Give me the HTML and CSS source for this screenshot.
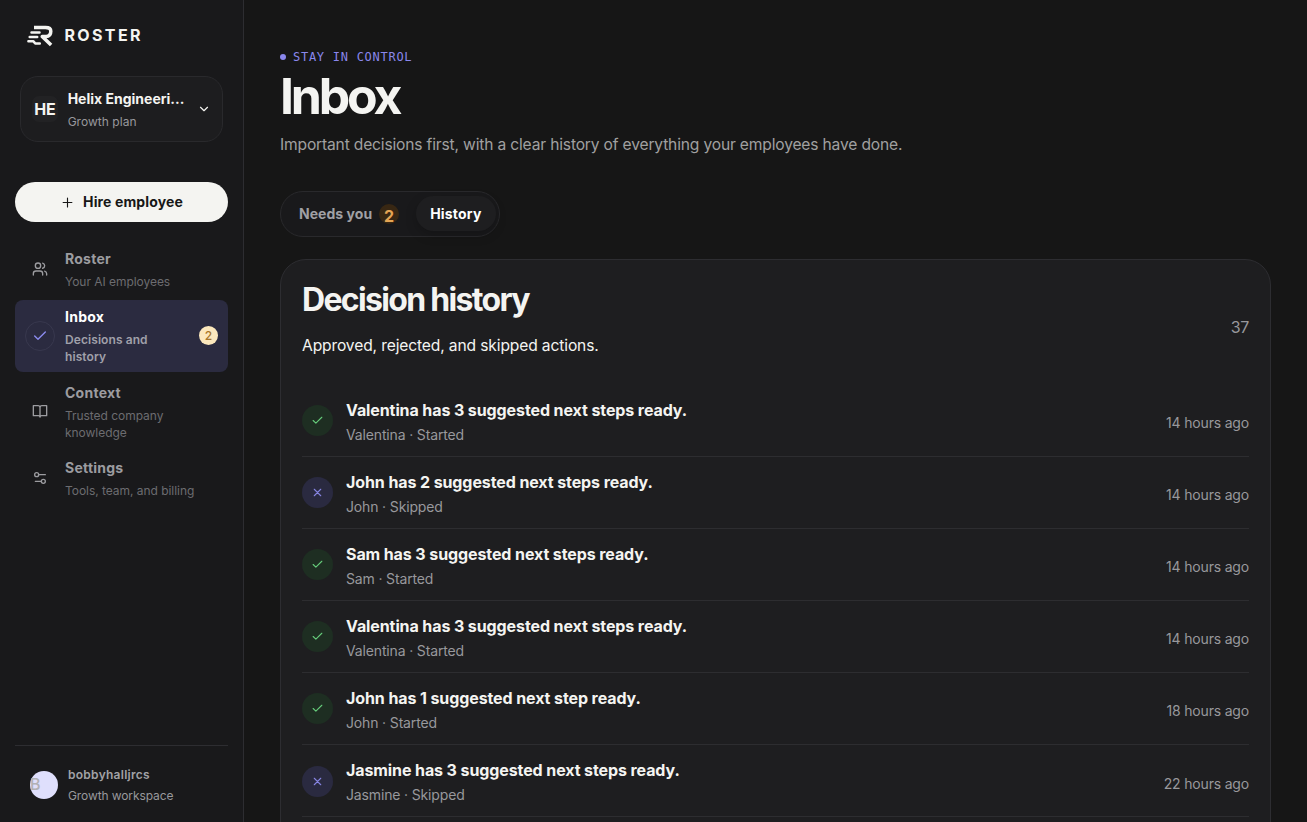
FILE: index.html
```html
<!DOCTYPE html>
<html lang="en">
<head>
<meta charset="utf-8">
<title>Roster – Inbox</title>
<link rel="stylesheet" href="styles.css">
</head>
<body>
<div class="app">
  <aside class="sidebar">
    <div class="brand">
      <svg class="brand-mark" viewBox="0 0 28 22"><path class="mark-r" d="M7 2.600h11.500c4 0 5.300 1.400 5.300 3.600 0 3.300-1.700 5.200-4.700 5.200H15.200l8.900 8.600"/><path class="mark-line" d="M4.500 7.400h8M2.700 12h7.500M1.400 16.200h4.800l2 2.200h4.600"/></svg>
      <span class="brand-name">ROSTER</span>
    </div>
    <div class="workspace">
      <span class="workspace-logo">HE</span>
      <div class="workspace-text"><div class="workspace-name">Helix Engineeri...</div><div class="workspace-plan">Growth plan</div></div>
      <svg class="chevron" viewBox="0 0 24 24"><path d="m6 9 6 6 6-6"/></svg>
    </div>
    <button class="hire"><svg viewBox="0 0 24 24"><path d="M5 12h14M12 5v14"/></svg><span>Hire employee</span></button>
    <nav class="nav">
      <a class="nav-item"><span class="nav-icon"><svg viewBox="0 0 24 24"><path d="M16 21v-2a4 4 0 0 0-4-4H6a4 4 0 0 0-4 4v2"/><circle cx="9" cy="7" r="4"/><path d="M22 21v-2a4 4 0 0 0-3-3.870M16 3.130a4 4 0 0 1 0 7.750"/></svg></span><span class="nav-text"><b>Roster</b><small>Your AI employees</small></span></a>
      <a class="nav-item active"><span class="nav-icon"><svg viewBox="0 0 24 24"><path d="M20 6 9 17l-5-5"/></svg></span><span class="nav-text"><b>Inbox</b><small>Decisions and history</small></span><span class="nav-badge">2</span></a>
      <a class="nav-item"><span class="nav-icon"><svg viewBox="0 0 24 24"><path d="M12 6.500V21M2 4h7a3 3 0 0 1 3 3 3 3 0 0 1 3-3h7v15h-7.500a2.500 2.500 0 0 0-2.500 2 2.500 2.500 0 0 0-2.500-2H2z"/></svg></span><span class="nav-text"><b>Context</b><small>Trusted company knowledge</small></span></a>
      <a class="nav-item"><span class="nav-icon"><svg viewBox="0 0 24 24"><path d="M20 7h-9M14 17H5"/><circle cx="17" cy="17" r="3"/><circle cx="7" cy="7" r="3"/></svg></span><span class="nav-text"><b>Settings</b><small>Tools, team, and billing</small></span></a>
    </nav>
    <div class="account">
      <span class="avatar">B</span>
      <div><div class="account-name">bobbyhalljrcs</div><div class="account-space">Growth workspace</div></div>
    </div>
  </aside>
  <main class="main">
    <div class="eyebrow">STAY IN CONTROL</div>
    <h1>Inbox</h1>
    <p class="lead">Important decisions first, with a clear history of everything your employees have done.</p>
    <div class="tabs">
      <span class="tab">Needs you <i>2</i></span>
      <span class="tab selected">History</span>
    </div>
    <section class="card">
      <header class="card-head">
        <div><h2>Decision history</h2><p>Approved, rejected, and skipped actions.</p></div>
        <span class="count">37</span>
      </header>
      <ul class="rows">
        <li><span class="status ok"><svg viewBox="0 0 24 24"><path d="M20 6 9 17l-5-5"/></svg></span><div class="row-text"><b>Valentina has 3 suggested next steps ready.</b><small>Valentina · Started</small></div><time>14 hours ago</time></li>
        <li><span class="status skip"><svg viewBox="0 0 24 24"><path d="M18 6 6 18M6 6l12 12"/></svg></span><div class="row-text"><b>John has 2 suggested next steps ready.</b><small>John · Skipped</small></div><time>14 hours ago</time></li>
        <li><span class="status ok"><svg viewBox="0 0 24 24"><path d="M20 6 9 17l-5-5"/></svg></span><div class="row-text"><b>Sam has 3 suggested next steps ready.</b><small>Sam · Started</small></div><time>14 hours ago</time></li>
        <li><span class="status ok"><svg viewBox="0 0 24 24"><path d="M20 6 9 17l-5-5"/></svg></span><div class="row-text"><b>Valentina has 3 suggested next steps ready.</b><small>Valentina · Started</small></div><time>14 hours ago</time></li>
        <li><span class="status ok"><svg viewBox="0 0 24 24"><path d="M20 6 9 17l-5-5"/></svg></span><div class="row-text"><b>John has 1 suggested next step ready.</b><small>John · Started</small></div><time>18 hours ago</time></li>
        <li><span class="status skip"><svg viewBox="0 0 24 24"><path d="M18 6 6 18M6 6l12 12"/></svg></span><div class="row-text"><b>Jasmine has 3 suggested next steps ready.</b><small>Jasmine · Skipped</small></div><time>22 hours ago</time></li>
      </ul>
    </section>
  </main>
</div>
</body>
</html>
```
FILE: styles.css
```css
* { box-sizing: border-box; }
body { margin: 0; background: #161616; color: #f4f4f1; font-family: Inter, "Liberation Sans", sans-serif; font-size: 16px; }
svg { fill: none; stroke: currentColor; stroke-width: 2; stroke-linecap: round; stroke-linejoin: round; display: block; flex: none; }
h1, h2, p, ul { margin: 0; padding: 0; }
small, b { display: block; }

.app { display: grid; grid-template-columns: 244px 1fr; grid-template-rows: 822px; height: 822px; overflow: hidden; }

.sidebar { display: flex; flex-direction: column; background: #19191b; border-right: 1px solid #2d2d31; padding: 24px 15px 0; }
.brand { display: flex; align-items: center; height: 22px; padding-left: 12px; gap: 9.5px; }
.brand-mark { width: 28px; height: 22px; margin-top: 2px; }
.mark-r { stroke-width: 3.5; stroke-linecap: butt; }
.mark-line { stroke-width: 2.5; }
.brand-name { font-size: 16px; font-weight: 750; letter-spacing: 2.35px; line-height: 22px; }

.workspace { display: flex; align-items: center; height: 66px; margin: 30px 5px 0; padding: 0 11px; border: 1px solid #29292c; border-radius: 18px; background: #1d1d1f; }
.workspace-logo { width: 26px; height: 26px; border-radius: 7px; background: #222224; font-size: 16px; font-weight: 700; line-height: 27px; letter-spacing: -.3px; display: flex; justify-content: center; }
.workspace-text { width: 121px; margin-left: 10px; }
.workspace-name { font-size: 14px; font-weight: 650; line-height: 22px; white-space: nowrap; }
.workspace-plan { font-size: 12px; line-height: 18px; color: #98989c; margin-top: 3px; letter-spacing: .03px; }
.chevron { width: 14px; height: 14px; margin-left: 10px; }

.hire { display: flex; align-items: center; justify-content: center; gap: 8px; flex: none; height: 40px; margin-top: 40px; padding: 0; border: 0; border-radius: 20px; background: #f4f4f1; color: #171717; font: 650 14px/20px Inter, sans-serif; letter-spacing: .12px; }
.hire svg { width: 15px; height: 15px; stroke-width: 1.8; }

.nav { display: flex; flex-direction: column; gap: 4px; margin-top: 20px; }
.nav-item { display: flex; align-items: center; padding: 6px 10px 6.3px; border-radius: 8px; color: #9c9ca0; }
.nav-icon { display: flex; align-items: center; justify-content: center; flex: none; width: 30px; height: 30px; border: 1px solid transparent; border-radius: 50%; }
.nav-icon svg { width: 16px; height: 16px; }
.nav-text { width: 134px; margin-left: 10px; }
.nav-text b { font-size: 14px; font-weight: 650; line-height: 22px; letter-spacing: .25px; }
.nav-text small { font-size: 12px; line-height: 17px; color: #6c6c70; margin-top: 3px; letter-spacing: -.04px; }
.nav-item.active { background: #2b2b40; color: #fff; }
.active .nav-icon { border-color: #38384e; color: #8c8cf0; }
.active .nav-text { width: 110px; }
.active .nav-text small { color: #a0a0aa; font-weight: 600; letter-spacing: .08px; }
.nav-badge { margin-left: auto; width: 19px; height: 19px; border-radius: 50%; background: #fce8bd; color: #a9762a; font-size: 12px; font-weight: 500; line-height: 19px; text-align: center; }

.account { display: flex; align-items: center; height: 77px; margin-top: auto; padding: 2px 15px 0; border-top: 1px solid #2d2d31; }
.avatar { width: 28px; height: 28px; border-radius: 50%; margin: -1px 10px 0 0; background: #dfdffc; color: #b1b1b5; font-size: 16px; font-weight: 500; line-height: 26px; }
.account-name { font-size: 12px; font-weight: 600; line-height: 18px; color: #a2a2a6; letter-spacing: .27px; }
.account-space { font-size: 12px; line-height: 18px; color: #98989c; margin-top: 3px; letter-spacing: -.1px; }

.main { padding: 49px 36px 0; overflow: hidden; }
.eyebrow { display: flex; align-items: center; gap: 7px; font: 12px/16px "DejaVu Sans Mono", monospace; letter-spacing: .73px; color: #8a87ec; }
.eyebrow::before { content: ""; width: 6px; height: 6px; border-radius: 50%; background: #8a87ec; }
h1 { font-size: 50px; font-weight: 700; line-height: 50px; letter-spacing: -3.2px; margin-top: 6px; }
.lead { font-size: 15.6px; line-height: 24px; color: #a0a0a0; margin-top: 12px; letter-spacing: -.17px; }
.tabs { display: flex; width: 220px; height: 46px; margin-top: 34px; padding: 4px; border: 1px solid #29292c; border-radius: 23px; background: #19191b; font-size: 14px; font-weight: 650; line-height: 36px; color: #a0a0a4; }
.tab { display: flex; align-items: center; padding: 0 14px; height: 35px; letter-spacing: .04px; white-space: nowrap; }
.tab i { width: 20px; height: 20px; margin-left: 7px; border-radius: 50%; background: #382713; color: #e5a554; font-size: 16px; font-style: normal; line-height: 24px; text-align: center; }
.tab.selected { margin-left: 3px; border-radius: 18px; background: #1e1e20; color: #fff; box-shadow: 0 4px 12px #0003; letter-spacing: .2px; }

.card { height: 620px; margin-top: 22px; padding: 21px; border: 1px solid #2d2d31; border-radius: 26px; background: #1e1e20; }
.card-head { display: flex; align-items: center; justify-content: space-between; height: 92px; }
h2 { font-size: 32px; font-weight: 700; line-height: 38px; letter-spacing: -1.68px; margin-top: -15px; }
.card-head p { font-size: 15.6px; line-height: 24px; margin-top: 15px; letter-spacing: -.13px; }
.count { color: #98989c; letter-spacing: -.3px; }
.rows { list-style: none; padding-top: 11.5px; }
.rows li { display: flex; align-items: center; height: 72.1px; padding-top: 2px; border-bottom: 1px solid #2d2d30; }
.status { display: flex; align-items: center; justify-content: center; width: 31px; height: 31px; margin-top: -1px; border-radius: 50%; }
.status svg { width: 13px; height: 13px; }
.ok { background: #1e2e22; color: #66cc7b; }
.skip { background: #2a2a40; color: #8684e0; }
.row-text { flex: 1; margin-left: 13px; }
.row-text b { font-size: 16px; font-weight: 650; line-height: 24px; letter-spacing: -.1px; }
.row-text small { font-size: 14px; line-height: 20px; color: #98989c; margin-top: 3px; letter-spacing: -.15px; }
time { font-size: 14px; line-height: 20px; color: #98989c; margin-top: 4px; letter-spacing: -.18px; }
```
